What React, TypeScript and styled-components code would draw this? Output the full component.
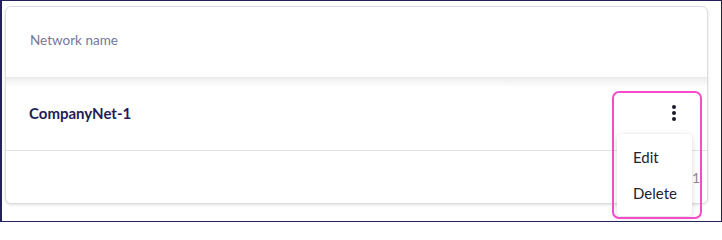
import React, { useState } from "react";
import styled, { createGlobalStyle } from "styled-components";

const GlobalStyle = createGlobalStyle`
  html, body {
    margin: 0;
    padding: 0;
    background: #ffffff;
  }
  body {
    font-family: Lato, "Noto Sans", "Liberation Sans", sans-serif;
  }
`;

const Frame = styled.div`
  position: relative;
  box-sizing: border-box;
  width: 722px;
  height: 222px;
  border: 1px solid #24205a;
  border-left-width: 2px;
  padding: 5px 13px 0 3px;
  background: #ffffff;
  overflow: hidden;
`;

const Card = styled.div`
  box-sizing: border-box;
  height: 198px;
  border: 1px solid #dcdce0;
  border-radius: 6px;
  box-shadow: 0 1px 3px rgba(0, 0, 0, 0.12);
  display: flex;
  flex-direction: column;
  background: #ffffff;
`;

const HeaderRow = styled.div`
  box-sizing: border-box;
  height: 71px;
  display: flex;
  align-items: center;
  padding: 0 0 5px 24px;
  border-bottom: 1px solid #cfcfd4;
  position: relative;

  &::after {
    content: "";
    position: absolute;
    left: 0;
    right: 0;
    top: 100%;
    height: 10px;
    background: linear-gradient(#ececef, rgba(255, 255, 255, 0));
  }
`;

const HeaderLabel = styled.span`
  font-size: 13.5px;
  color: #77769a;
`;

const DataRow = styled.div`
  box-sizing: border-box;
  height: 73px;
  display: flex;
  align-items: center;
  justify-content: space-between;
  padding: 0 23px 2px 23px;
  border-bottom: 1px solid #e2e2e6;
`;

const NetworkName = styled.span`
  font-size: 15px;
  font-weight: 700;
  color: #221d56;
`;

const KebabButton = styled.button`
  border: none;
  background: transparent;
  padding: 0;
  width: 20px;
  height: 24px;
  display: flex;
  align-items: center;
  justify-content: center;
  cursor: pointer;
`;

const FooterRow = styled.div`
  flex: 1;
  display: flex;
  align-items: center;
  justify-content: flex-end;
  padding-right: 7px;
  font-size: 14px;
  color: #8a8a99;
`;

const Highlight = styled.div`
  position: absolute;
  left: 610px;
  top: 90px;
  width: 90px;
  height: 128px;
  box-sizing: border-box;
  border: 2px solid #f64ccb;
  border-radius: 7px;
  pointer-events: none;
`;

const Menu = styled.ul`
  position: absolute;
  left: 615px;
  top: 133px;
  width: 75px;
  margin: 0;
  padding: 5px 0;
  list-style: none;
  background: #ffffff;
  border-radius: 4px;
  box-shadow: 0 2px 6px rgba(0, 0, 0, 0.14), 0 0 2px rgba(0, 0, 0, 0.06);
`;

const MenuItem = styled.li`
  padding: 0 0 0 16px;
  height: 36px;
  display: flex;
  align-items: center;
  font-size: 15px;
  color: #222230;
  cursor: pointer;
`;

const KebabIcon = () => (
  <svg width="6" height="18" viewBox="0 0 6 18">
    <circle cx="3" cy="3" r="2" fill="#1d1b2c" />
    <circle cx="3" cy="9" r="2" fill="#1d1b2c" />
    <circle cx="3" cy="15" r="2" fill="#1d1b2c" />
  </svg>
);

const App: React.FC = () => {
  const [open, setOpen] = useState(true);

  return (
    <>
      <GlobalStyle />
      <Frame>
        <Card>
          <HeaderRow>
            <HeaderLabel>Network name</HeaderLabel>
          </HeaderRow>
          <DataRow>
            <NetworkName>CompanyNet-1</NetworkName>
            <KebabButton onClick={() => setOpen((prev) => !prev)}>
              <KebabIcon />
            </KebabButton>
          </DataRow>
          <FooterRow>1</FooterRow>
        </Card>
        {open && (
          <Menu>
            <MenuItem>Edit</MenuItem>
            <MenuItem>Delete</MenuItem>
          </Menu>
        )}
        <Highlight />
      </Frame>
    </>
  );
};

export default App;
